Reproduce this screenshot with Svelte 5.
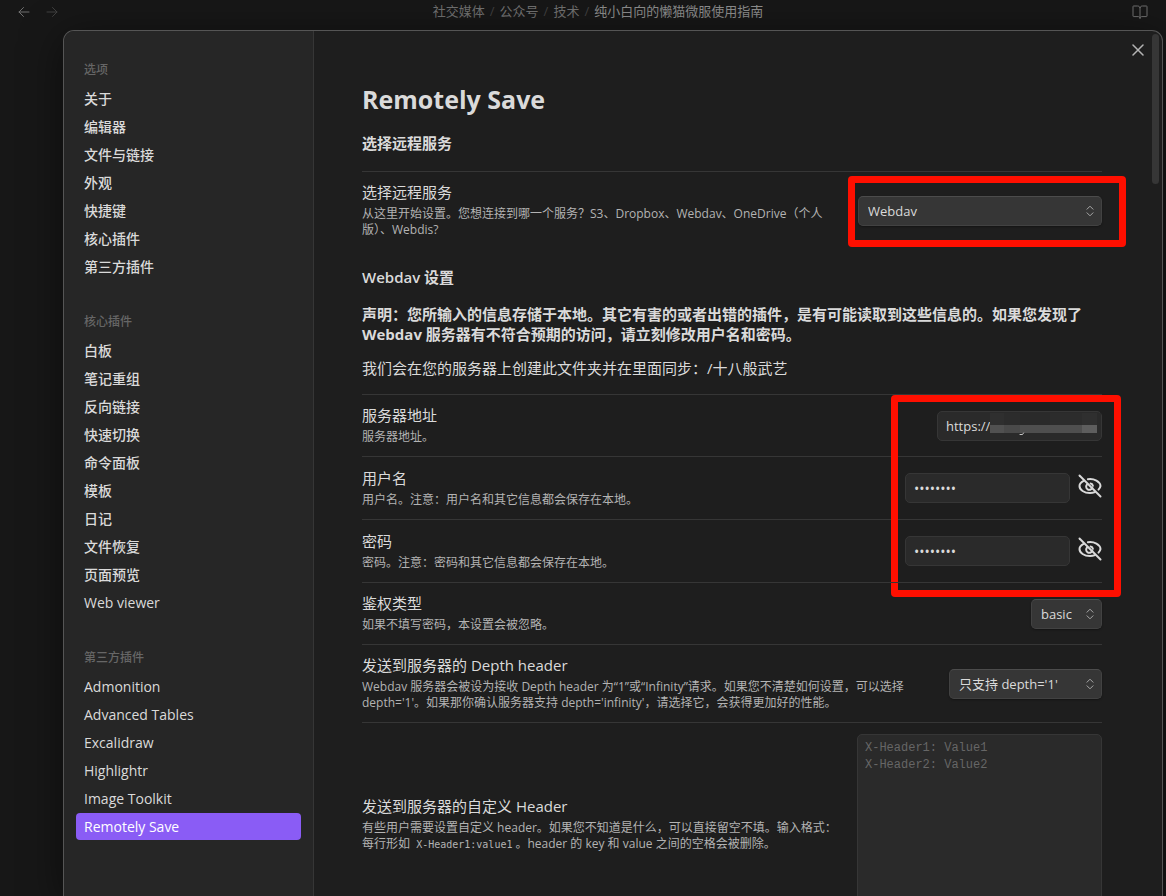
<script>
  const crumbs = ['社交媒体', '公众号', '技术'];
  const groups = [
    { title: '选项', items: ['关于', '编辑器', '文件与链接', '外观', '快捷键', '核心插件', '第三方插件'] },
    {
      title: '核心插件',
      items: ['白板', '笔记重组', '反向链接', '快速切换', '命令面板', '模板', '日记', '文件恢复', '页面预览', 'Web viewer']
    },
    {
      title: '第三方插件',
      items: ['Admonition', 'Advanced Tables', 'Excalidraw', 'Highlightr', 'Image Toolkit', 'Remotely Save']
    }
  ];
  let active = $state('Remotely Save');
  let service = $state('Webdav');
  let auth = $state('basic');
  let depth = $state("只支持 depth='1'");
  let url = $state('https://t');
  let user = $state('username');
  let pass = $state('password');
  let showUser = $state(false);
  let showPass = $state(false);
</script>

{#snippet dropdown(id, value, options, kind)}
  <span class="select {kind}">
    <select {id} {value}>
      {#each options as option}<option>{option}</option>{/each}
    </select>
    <svg viewBox="0 0 8 12" width="8" height="12" aria-hidden="true">
      <path d="M1 4.2 4 1.2l3 3M1 7.8l3 3 3-3" />
    </svg>
  </span>
{/snippet}

{#snippet eyeOff()}
  <svg viewBox="0 0 24 24" width="24" height="24" aria-hidden="true">
    <path d="M9.900 5.200A10.500 7.300 0 0 1 22.500 12a7 7 0 0 1-2 3.600" />
    <path d="M5.600 6.900C3 8.300 1.500 10.200 1.500 12c0 3.900 4.700 7 10.500 7 1.800 0 3.400-.3 4.900-.9" />
    <path d="M9.300 10.200a3.200 3.200 0 1 0 5 3.700" />
    <path d="M12.600 9.500a2.700 2.700 0 0 1 2.300 2.300" />
    <path d="M1.500 1.500l21 21" />
  </svg>
{/snippet}

<div class="app">
  <header class="topbar">
    <nav class="history">
      <button aria-label="后退">
        <svg viewBox="0 0 16 16" width="16" height="16"><path d="M13 8H3M7.500 3.500 3 8l4.500 4.500" /></svg>
      </button>
      <button aria-label="前进" class="dim">
        <svg viewBox="0 0 16 16" width="16" height="16"><path d="M3 8h10M8.500 3.500 13 8l-4.500 4.500" /></svg>
      </button>
    </nav>
    <div class="crumbs">
      {#each crumbs as crumb}
        <a href="#top">{crumb}</a><span class="slash">/</span>
      {/each}
      <span class="current">纯小白向的懒猫微服使用指南</span>
    </div>
    <button aria-label="阅读视图">
      <svg viewBox="0 0 16 16" width="16" height="16">
        <path d="M8 3.500v11M8 3.500C7.600 2.500 6.800 2 5.500 2h-4C1.200 2 1 2.200 1 2.500v9.500c0 .3.2.6.5.6h4.700c1 0 1.800.7 1.800 1.600 0-.9.800-1.600 1.800-1.600h4.700c.3 0 .5-.3.5-.6V2.500c0-.3-.2-.5-.5-.5h-4C9.200 2 8.400 2.500 8 3.500z" />
      </svg>
    </button>
  </header>

  <div class="modal" role="dialog" aria-label="设置">
    <aside>
      {#each groups as group}
        <section>
          <h2>{group.title}</h2>
          {#each group.items as item}
            <button class:active={item === active} onclick={() => (active = item)}>{item}</button>
          {/each}
        </section>
      {/each}
    </aside>

    <main>
      <h1>Remotely Save</h1>
      <h3>选择远程服务</h3>

      <div class="row">
        <div class="info">
          <label for="service">选择远程服务</label>
          <p>从这里开始设置。您想连接到哪一个服务？S3、Dropbox、Webdav、OneDrive（个人版）、Webdis?</p>
        </div>
        {@render dropdown('service', service, ['Webdav', 'S3', 'Dropbox', 'OneDrive', 'Webdis'], 'wide')}
        <div class="mark mark-service" aria-hidden="true"></div>
      </div>

      <h3 class="sub">Webdav 设置</h3>
      <div class="text">
        <p><strong>声明：您所输入的信息存储于本地。其它有害的或者出错的插件，是有可能读取到这些信息的。如果您发现了 Webdav 服务器有不符合预期的访问，请立刻修改用户名和密码。</strong></p>
        <p>我们会在您的服务器上创建此文件夹并在里面同步：/十八般武艺</p>
      </div>

      <div class="account">
        <div class="row">
          <div class="info">
            <label for="url">服务器地址</label>
            <p>服务器地址。</p>
          </div>
          <div class="masked">
            <input id="url" type="text" bind:value={url} />
            <svg class="mosaic" viewBox="0 0 111 22" width="111" height="22" aria-hidden="true">
              <path fill="#2a2a2a" d="M0 0h111v21H0z" />
              <path fill="#2f2f2f" d="M0 0h14v12H0zM92 0h15v12H92z" />
              <path fill="#2c2c2c" d="M14 0h16v12H14zM60 0h32v12H60z" />
              <path fill="#515151" d="M0 12h14v8H0z" />
              <path fill="#4a4a4a" d="M14 12h16v8H14z" />
              <path fill="#4f4f4f" d="M30 12h62v8H30z" />
              <path fill="#5e5e5e" d="M92 12h15v8H92z" />
              <path fill="none" stroke="#c8c8c8" d="M30 21.500h2.500l1-1.500" />
            </svg>
          </div>
        </div>
        <div class="row">
          <div class="info">
            <label for="user">用户名</label>
            <p>用户名。注意：用户名和其它信息都会保存在本地。</p>
          </div>
          <div class="secret">
            <input id="user" type={showUser ? 'text' : 'password'} bind:value={user} />
            <button aria-label="显示用户名" onclick={() => (showUser = !showUser)}>{@render eyeOff()}</button>
          </div>
        </div>
        <div class="row">
          <div class="info">
            <label for="pass">密码</label>
            <p>密码。注意：密码和其它信息都会保存在本地。</p>
          </div>
          <div class="secret">
            <input id="pass" type={showPass ? 'text' : 'password'} bind:value={pass} />
            <button aria-label="显示密码" onclick={() => (showPass = !showPass)}>{@render eyeOff()}</button>
          </div>
        </div>
        <div class="mark mark-account" aria-hidden="true"></div>
      </div>

      <div class="row">
        <div class="info">
          <label for="auth">鉴权类型</label>
          <p>如果不填写密码，本设置会被忽略。</p>
        </div>
        {@render dropdown('auth', auth, ['basic'], '')}
      </div>

      <div class="row">
        <div class="info">
          <label for="depth">发送到服务器的 Depth header</label>
          <p>Webdav 服务器会被设为接收 Depth header 为“1”或“Infinity”请求。如果您不清楚如何设置，可以选择 depth='1'。如果那你确认服务器支持 depth='infinity'，请选择它，会获得更加好的性能。</p>
        </div>
        {@render dropdown('depth', depth, ["只支持 depth='1'"], 'medium')}
      </div>

      <div class="row">
        <div class="info">
          <label for="headers">发送到服务器的自定义 Header</label>
          <p>有些用户需要设置自定义 header。如果您不知道是什么，可以直接留空不填。输入格式：<br />每行形如 <code>X-Header1:value1</code>。header 的 key 和 value 之间的空格会被删除。</p>
        </div>
        <textarea id="headers" placeholder={'X-Header1: Value1\nX-Header2: Value2'}></textarea>
      </div>
    </main>

    <div class="thumb"></div>
    <button class="close" aria-label="关闭">
      <svg viewBox="0 0 12 12" width="12" height="12"><path d="M1 1l10 10M11 1 1 11" /></svg>
    </button>
  </div>
</div>

<style>
  :global(body) {
    margin: 0;
    background: #171717;
  }
  .app,
  .app * {
    box-sizing: border-box;
  }
  .app {
    display: flex;
    flex-direction: column;
    height: 100vh;
    overflow: hidden;
    color: #dadada;
    font-family: 'Open Sans', 'Noto Sans CJK SC', sans-serif;
    font-size: 15px;
  }
  h1,
  h2,
  h3,
  p {
    margin: 0;
  }
  button,
  input,
  select,
  textarea {
    margin: 0;
    font-family: inherit;
    color: inherit;
  }
  button {
    padding: 0;
    border: 0;
    background: none;
  }
  svg {
    display: block;
    fill: none;
    stroke: currentColor;
    stroke-linecap: round;
    stroke-linejoin: round;
  }

  .topbar {
    display: flex;
    flex: none;
    align-items: center;
    height: 24px;
    margin-bottom: 6px;
    padding: 0 18px 0 16px;
    color: #707070;
  }
  .history {
    display: flex;
    gap: 12px;
    padding-right: 4px;
  }
  .history .dim {
    color: #404040;
  }
  .crumbs {
    display: flex;
    flex: 1;
    justify-content: center;
    gap: 5px;
    padding-bottom: 2px;
    font-size: 13px;
    line-height: 20px;
    white-space: nowrap;
  }
  .crumbs a {
    color: #707070;
    text-decoration: none;
  }
  .slash {
    color: #404040;
  }
  .current {
    color: #8c8c8c;
  }

  .modal {
    position: relative;
    display: flex;
    flex: 1;
    min-height: 0;
    margin: 0 3px 0 63px;
    overflow: hidden;
    border: 1px solid #555;
    border-bottom: 0;
    border-radius: 11px 11px 0 0;
    background: #1e1e1e;
    box-shadow: 0 8px 40px rgba(0, 0, 0, 0.5);
  }
  aside {
    display: flex;
    flex: none;
    flex-direction: column;
    gap: 27px;
    width: 250px;
    padding: 24px 12px;
    border-right: 1px solid #363636;
    background: #262626;
  }
  aside section {
    display: flex;
    flex-direction: column;
    gap: 1px;
  }
  aside h2 {
    padding: 0 8px;
    color: #666;
    font-size: 12px;
    font-weight: 500;
    line-height: 29px;
  }
  aside button {
    padding: 0 8px;
    border-radius: 4px;
    font-size: 14px;
    font-weight: 500;
    line-height: 27px;
    text-align: left;
  }
  aside button.active {
    background: #8a5cf5;
    color: #fff;
  }

  main {
    flex: 1;
    min-width: 0;
    padding: 51px 60px 0 48px;
  }
  h1 {
    font-size: 25px;
    font-weight: 700;
    line-height: 34px;
  }
  h3 {
    padding: 17px 0 18px;
    font-size: 15px;
    font-weight: 600;
    line-height: 20px;
  }
  h3.sub {
    padding: 18px 0 17px;
  }
  .text {
    display: flex;
    flex-direction: column;
    gap: 14px;
    padding-bottom: 16px;
    line-height: 20px;
  }
  .row {
    position: relative;
    display: flex;
    align-items: center;
    gap: 16px;
    padding: 11px 0;
    border-top: 1px solid #363636;
  }
  .info {
    flex: 1;
    min-width: 0;
  }
  .info label {
    display: block;
    margin-bottom: 4px;
    line-height: 19px;
  }
  .info p {
    color: #b3b3b3;
    font-size: 12px;
    line-height: 16px;
  }
  code {
    padding: 0 3px;
    font-family: 'DejaVu Sans Mono', monospace;
    font-size: 10px;
    line-height: 10px;
  }

  .select {
    position: relative;
    flex: none;
  }
  .select.wide {
    width: 244px;
  }
  .select.medium {
    width: 153px;
  }
  .select select {
    display: block;
    width: 100%;
    height: 30px;
    padding: 0 29px 0 9px;
    border: 1px solid #424242;
    border-top-color: #4c4c4c;
    border-radius: 5px;
    outline: 0;
    background: #363636;
    box-shadow: 0 1px 2px rgba(0, 0, 0, 0.35);
    font-size: 13px;
    appearance: none;
  }
  .select svg {
    position: absolute;
    top: 9px;
    right: 8px;
    color: #a8a8a8;
    pointer-events: none;
  }
  input {
    display: block;
    width: 165px;
    height: 30px;
    padding: 0 8px;
    border: 1px solid #363636;
    border-radius: 5px;
    outline: 0;
    background: #2a2a2a;
    font-size: 13px;
  }
  input[type='password'] {
    font-size: 14px;
  }
  .masked {
    position: relative;
    height: 30px;
  }
  .mosaic {
    position: absolute;
    top: 2px;
    right: 1px;
    stroke: none;
  }
  .secret {
    display: flex;
    align-items: center;
    gap: 8px;
    height: 40px;
  }
  .secret button {
    padding-bottom: 4px;
  }
  .secret svg {
    stroke-width: 2;
  }
  textarea {
    display: block;
    flex: none;
    width: 245px;
    height: 180px;
    padding: 5px 7px;
    border: 1px solid #363636;
    border-radius: 5px;
    outline: 0;
    background: #2a2a2a;
    font-family: 'Liberation Mono', monospace;
    font-size: 12px;
    line-height: 17px;
    resize: none;
  }
  textarea::placeholder {
    color: #666;
  }

  .account {
    position: relative;
  }
  .mark {
    position: absolute;
    border: 7px solid #ff0f00;
    border-radius: 4px;
    pointer-events: none;
  }
  .mark-service {
    top: 4px;
    right: -24px;
    width: 278px;
    height: 71px;
  }
  .mark-account {
    top: 1px;
    right: -19px;
    width: 230px;
    height: 202px;
  }

  .thumb {
    position: absolute;
    top: 3px;
    right: 3px;
    width: 7px;
    height: 150px;
    border-radius: 4px;
    background: #363636;
  }
  .close {
    position: absolute;
    top: 13px;
    right: 18px;
    color: #b3b3b3;
  }
  .close svg {
    stroke-width: 1.5;
  }
</style>
